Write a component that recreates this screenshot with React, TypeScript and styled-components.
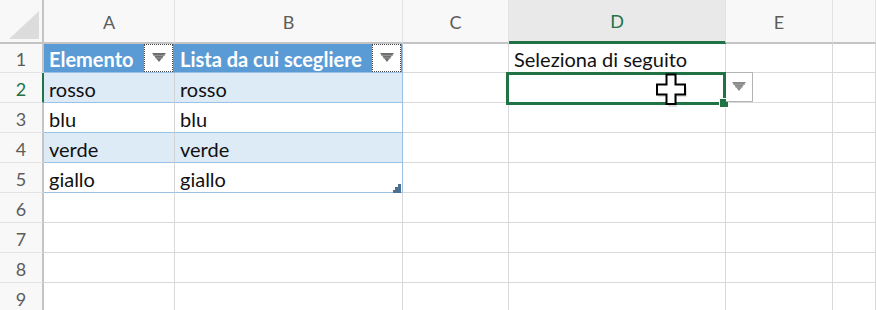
import React from "react";
import styled, { createGlobalStyle, css } from "styled-components";

type Kind = "plain" | "head" | "band" | "body";

interface CellData {
  text?: string;
  kind?: Kind;
  filter?: boolean;
  resize?: boolean;
}

const COLS = ["A", "B", "C", "D", "E", ""];
const ACTIVE_COL = "D";
const ACTIVE_ROW = 2;

const rows: Record<number, Record<string, CellData>> = {
  1: {
    A: { text: "Elemento", kind: "head", filter: true },
    B: { text: "Lista da cui scegliere", kind: "head", filter: true },
    D: { text: "Seleziona di seguito" },
  },
  2: { A: { text: "rosso", kind: "band" }, B: { text: "rosso", kind: "band" } },
  3: { A: { text: "blu", kind: "body" }, B: { text: "blu", kind: "body" } },
  4: { A: { text: "verde", kind: "band" }, B: { text: "verde", kind: "band" } },
  5: { A: { text: "giallo", kind: "body" }, B: { text: "giallo", kind: "body", resize: true } },
};

const GlobalStyle = createGlobalStyle`
  html, body {
    margin: 0;
    padding: 0;
    background: #ffffff;
  }
  body {
    font-family: Lato, "Liberation Sans", sans-serif;
  }
`;

const Sheet = styled.div`
  position: relative;
  display: grid;
  grid-template-columns: 44px 131px 228px 106px 217px 107px 1fr;
  grid-template-rows: 44px 29px repeat(8, 30px);
  width: 876px;
  height: 310px;
  overflow: hidden;
  background: #fff;
`;

const Corner = styled.div`
  display: flex;
  justify-content: flex-end;
  align-items: flex-end;
  padding: 0 3px 3px 0;
  background: #f8f8f8;
  border-right: 2px solid #c4c4c4;
  border-bottom: 2px solid #c4c4c4;
`;

const ColHead = styled.div<{ $active: boolean }>`
  display: flex;
  align-items: center;
  justify-content: center;
  padding-top: 1px;
  font-size: 18px;
  color: ${(p) => (p.$active ? "#217346" : "#5c5c5c")};
  background: ${(p) => (p.$active ? "#e9e9e9" : "#f8f8f8")};
  border-right: 1px solid #e2e2e2;
  border-bottom: 2px solid ${(p) => (p.$active ? "#217346" : "#c4c4c4")};
  ${(p) =>
    p.$active &&
    css`
      border-bottom-width: 3px;
    `}
`;

const RowHead = styled.div<{ $active: boolean }>`
  display: flex;
  align-items: center;
  justify-content: center;
  padding-top: 2px;
  font-size: 18px;
  color: ${(p) => (p.$active ? "#217346" : "#5c5c5c")};
  background: #f8f8f8;
  border-right: 2px solid ${(p) => (p.$active ? "#217346" : "#c4c4c4")};
  border-bottom: 1px solid #e4e4e4;
`;

const kindStyles: Record<Kind, ReturnType<typeof css>> = {
  plain: css`
    background: #fff;
    border-bottom: 1px solid #d9d9d9;
  `,
  head: css`
    background: #5b9bd5;
    color: #fff;
    font-weight: 700;
    border-bottom: 1px solid #9bc2e6;
  `,
  band: css`
    background: #ddebf7;
    border-bottom: 1px solid #9bc2e6;
  `,
  body: css`
    background: #fff;
    border-bottom: 1px solid #9bc2e6;
  `,
};

const Cell = styled.div<{ $kind: Kind; $edge: string }>`
  position: relative;
  display: flex;
  align-items: center;
  justify-content: space-between;
  padding: 2px 1px 0 5px;
  font-size: 20px;
  color: #111;
  white-space: nowrap;
  overflow: visible;
  border-right: 1px solid ${(p) => p.$edge};
  ${(p) => kindStyles[p.$kind]}
`;

const FilterButton = styled.div`
  display: flex;
  align-items: center;
  justify-content: center;
  width: 29px;
  height: 28px;
  margin-top: -2px;
  flex-shrink: 0;
  box-sizing: border-box;
  background: #fff;
  border: 1px dotted #4a4a4a;
`;

const ResizeGrip = styled.svg`
  position: absolute;
  right: 1px;
  bottom: -1px;
`;

const Selection = styled.div`
  position: absolute;
  left: 506px;
  top: 72px;
  width: 220px;
  height: 33px;
  box-sizing: border-box;
  border: 3px solid #217346;
  pointer-events: none;
`;

const FillHandle = styled.div`
  position: absolute;
  right: -6px;
  bottom: -6px;
  width: 8px;
  height: 8px;
  background: #217346;
  border: 1px solid #fff;
`;

const ListButton = styled.div`
  position: absolute;
  left: 726px;
  top: 72px;
  width: 27px;
  height: 30px;
  box-sizing: border-box;
  display: flex;
  align-items: center;
  justify-content: center;
  background: #fff;
  border: 1px solid #b4b4b4;
  border-left: none;
`;

const Cursor = styled.svg`
  position: absolute;
  left: 654px;
  top: 72px;
`;

const Arrow: React.FC<{ color?: string }> = ({ color = "#6e6e6e" }) => (
  <svg width="14" height="10" viewBox="0 0 14 10">
    <polygon points="0,0 14,0 7,9" fill={color} />
    <line x1="1" y1="2.5" x2="13" y2="2.5" stroke="#a0a0a0" strokeWidth="0.8" />
    <line x1="3" y1="5" x2="11" y2="5" stroke="#a0a0a0" strokeWidth="0.8" />
  </svg>
);

const edgeColor = (col: string, kind: Kind) => {
  if (kind === "plain") return "#d9d9d9";
  if (col === "B") return "#9bc2e6";
  if (kind === "head") return "#5b9bd5";
  return "#d4d4d4";
};

const App: React.FC = () => {
  return (
    <>
      <GlobalStyle />
      <Sheet>
        <Corner>
          <svg width="30" height="28" viewBox="0 0 30 28">
            <polygon points="0,28 30,28 30,0" fill="#dcdcdc" />
          </svg>
        </Corner>
        {COLS.map((c, i) => (
          <ColHead key={i} $active={c === ACTIVE_COL}>
            {c}
          </ColHead>
        ))}

        {[1, 2, 3, 4, 5, 6, 7, 8, 9].map((r) => (
          <React.Fragment key={r}>
            <RowHead $active={r === ACTIVE_ROW}>{r}</RowHead>
            {COLS.map((c, i) => {
              const data = rows[r]?.[c] ?? {};
              const kind = data.kind ?? "plain";
              return (
                <Cell key={i} $kind={kind} $edge={edgeColor(c, kind)}>
                  <span>{data.text}</span>
                  {data.filter && (
                    <FilterButton>
                      <Arrow />
                    </FilterButton>
                  )}
                  {data.resize && (
                    <ResizeGrip width="8" height="9" viewBox="0 0 8 9">
                      <rect x="5" y="0" width="3" height="3" fill="#4f6f91" />
                      <rect x="2" y="3" width="3" height="3" fill="#4f6f91" />
                      <rect x="5" y="3" width="3" height="3" fill="#4f6f91" />
                      <rect x="0" y="6" width="3" height="3" fill="#4f6f91" />
                      <rect x="3" y="6" width="2" height="3" fill="#4f6f91" />
                      <rect x="5" y="6" width="3" height="3" fill="#4f6f91" />
                    </ResizeGrip>
                  )}
                </Cell>
              );
            })}
          </React.Fragment>
        ))}

        <Selection>
          <FillHandle />
        </Selection>
        <ListButton>
          <Arrow color="#8a8a8a" />
        </ListButton>
        <Cursor width="34" height="36" viewBox="0 0 34 36">
          <path
            d="M13 3 H22 V13 H32 V23 H22 V33 H13 V23 H3 V13 H13 Z"
            fill="#000"
            opacity="0.12"
            transform="translate(1 2)"
          />
          <path
            d="M12.5 2.5 H21.5 V12.5 H31 V22.5 H21.5 V32 H12.5 V22.5 H3 V12.5 H12.5 Z"
            fill="#fff"
            stroke="#000"
            strokeWidth="2"
            strokeLinejoin="miter"
          />
        </Cursor>
      </Sheet>
    </>
  );
};

export default App;
